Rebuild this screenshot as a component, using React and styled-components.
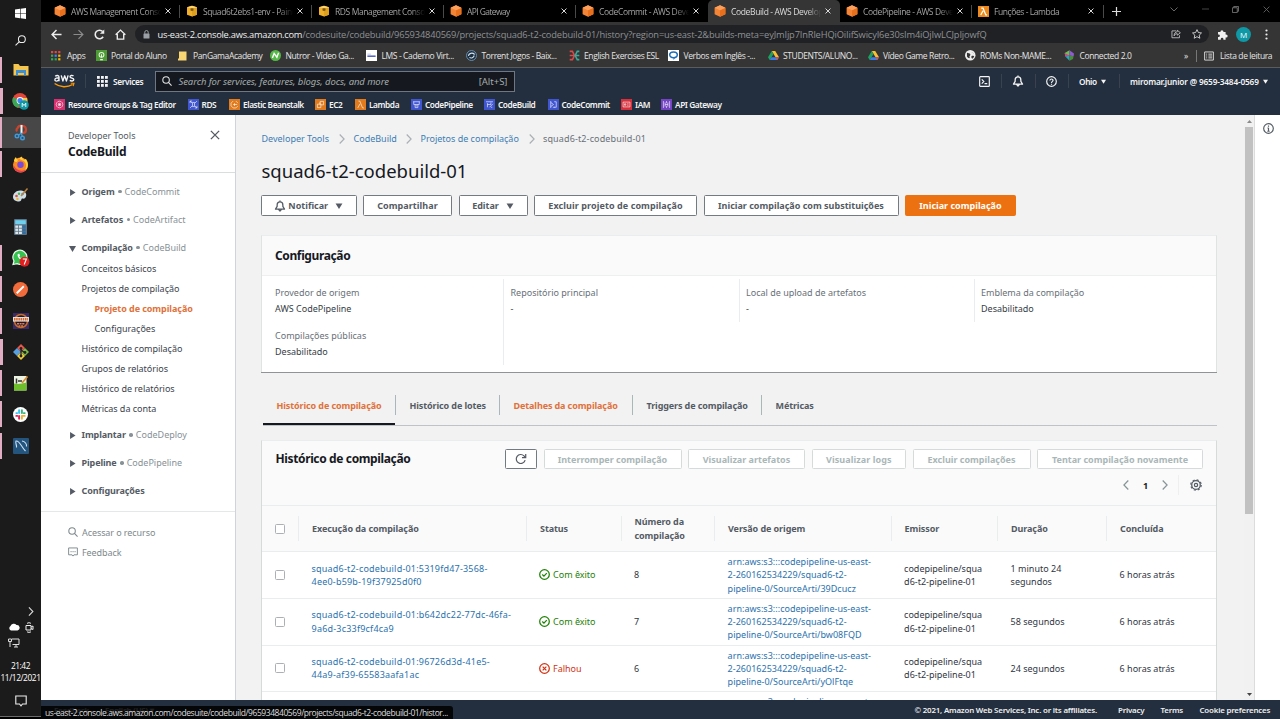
import React from "react";
import styled, { createGlobalStyle, css } from "styled-components";

const Global = createGlobalStyle`
  * { box-sizing: border-box; }
  html, body { margin: 0; padding: 0; background: #000; overflow: hidden; }
  body { font-family: "Noto Sans", "Open Sans", sans-serif; font-size: 9.3px; color: #16191f; }
  svg { flex: none; }
`;

const Desktop = styled.div`
  display: flex;
  width: 1280px;
  height: 719px;
  overflow: hidden;
`;

/* ---------- Taskbar ---------- */
const Taskbar = styled.aside`
  flex: none;
  width: 41px;
  height: 717px;
  background: #1c1b1b;
  border-bottom: 1px solid #6b6b6b;
  display: flex;
  flex-direction: column;
  color: #fff;
`;
const TaskSlot = styled.div`
  flex: none;
  height: ${(p) => p.$h || 31.3}px;
  display: flex;
  align-items: center;
  background: ${(p) => (p.$active ? "#484747" : "transparent")};
`;
const RunMark = styled.span`
  flex: none;
  width: ${(p) => p.$w}px;
  height: ${(p) => (p.$full ? "31px" : "26px")};
  background: ${(p) => (p.$w ? "#e0adc2" : "transparent")};
`;
const TaskIcon = styled.span`
  width: 41px;
  margin-left: -${(p) => p.$w}px;
  display: flex;
  justify-content: center;
`;
const Tray = styled.div`
  margin-top: auto;
  height: 113px;
  display: flex;
  flex-direction: column;
  align-items: center;
`;
const TrayRow = styled.div`
  width: 41px;
  height: 16px;
  padding: 0 7px 0 8px;
  display: flex;
  align-items: center;
  justify-content: ${(p) => (p.$end ? "flex-end" : "space-between")};
`;
const Clock = styled.div`
  margin-top: 9px;
  font: 8.4px/12px "Open Sans", sans-serif;
  letter-spacing: -0.45px;
  text-align: center;
  white-space: nowrap;
`;
const TrayNote = styled.div`
  height: 32px;
  width: 41px;
  padding-top: 2px;
  display: flex;
  align-items: center;
  justify-content: center;
`;

/* ---------- Browser ---------- */
const Browser = styled.div`
  position: relative;
  flex: none;
  width: 1239px;
  height: 719px;
  display: flex;
  flex-direction: column;
  font-family: "Open Sans", sans-serif;
`;
const TabStrip = styled.div`
  flex: none;
  height: 22px;
  background: #000;
  display: flex;
  align-items: center;
  padding-left: 7px;
`;
const Tab = styled.div`
  flex: none;
  width: 132px;
  height: 22px;
  display: flex;
  align-items: center;
  padding: 0 6px;
  color: ${(p) => (p.$active ? "#dcdcdc" : "#a3a3a3")};
  background: ${(p) => (p.$active ? "#353535" : "transparent")};
  border-radius: 5px 5px 0 0;
  font-size: 8.5px;
`;
const TabTitle = styled.span`
  flex: none;
  margin-left: 5px;
  width: 90px;
  overflow: hidden;
  white-space: nowrap;
  letter-spacing: ${(p) => p.$ls}px;
  mask-image: linear-gradient(90deg, #000 84%, transparent);
`;
const TabLine = styled.span`
  margin-left: auto;
  margin-right: -6px;
  width: 1px;
  height: 13px;
  background: ${(p) => (p.$off ? "transparent" : "#4a4a4a")};
`;
const CloseBox = styled.span`
  display: flex;
  margin-left: 4px;
`;
const NewTab = styled.span`
  display: flex;
  margin-left: 8px;
`;
const WindowButtons = styled.div`
  margin-left: auto;
  display: flex;
  align-items: center;
  width: 100px;
  padding-bottom: 4px;
  justify-content: space-between;
  margin-right: 10px;
`;
const NavBar = styled.div`
  flex: none;
  height: 23px;
  background: #353535;
  display: flex;
  align-items: center;
  padding: 1px 0 0 10px;
`;
const NavIcon = styled.span`
  flex: none;
  width: ${(p) => p.$w}px;
  display: flex;
  align-items: center;
`;
const UrlField = styled.div`
  flex: none;
  width: 1074px;
  height: 18px;
  margin-right: 8px;
  border-radius: 9px;
  background: #202124;
  display: flex;
  align-items: center;
  padding: 0 7px 0 8px;
  color: #8f9194;
  font-size: 9.3px;
`;
const UrlText = styled.span`
  flex: 1;
  margin-left: 7.5px;
  white-space: nowrap;
  letter-spacing: -0.145px;
  b { font-weight: 400; color: #f0f0f0; letter-spacing: -0.25px; }
`;
const Avatar = styled.span`
  width: 15px;
  height: 15px;
  border-radius: 50%;
  background: #0f98a5;
  color: #fff;
  font-size: 8px;
  display: flex;
  align-items: center;
  justify-content: center;
  margin: 0 13.5px 0 8px;
`;
const Bookmarks = styled.div`
  flex: none;
  height: 23px;
  background: #353535;
  border-bottom: 1px solid #5c5c5c;
  display: flex;
  align-items: center;
  padding: 0 0 1px 10px;
  color: #e4e4e4;
  font-size: 8.5px;
`;
const Bookmark = styled.div`
  flex: none;
  width: ${(p) => p.$w}px;
  display: flex;
  align-items: center;
  gap: ${(p) => p.$gap ?? 4.5}px;
  white-space: nowrap;
  letter-spacing: -0.38px;
`;
const BookmarkLine = styled.span`
  width: 1px;
  height: 12px;
  margin: 0 7px 0 -8px;
  background: #777;
`;

/* ---------- AWS header ---------- */
const AwsTop = styled.header`
  flex: none;
  height: 47px;
  background: #232f3e;
  color: #f4f4f4;
  font-family: "Noto Sans", sans-serif;
`;
const AwsRow = styled.div`
  height: 26px;
  display: flex;
  align-items: center;
  padding-left: 12.5px;
`;
const HeadLine = styled.span`
  width: 1px;
  height: 14px;
  margin-left: ${(p) => p.$ml || 0}px;
  background: #38434f;
`;
const ServicesBtn = styled.div`
  display: flex;
  align-items: center;
  gap: 5.5px;
  font-weight: 600;
  font-size: 8.3px;
  letter-spacing: -0.35px;
  margin-left: 11px;
  width: 58px;
`;
const SearchField = styled.div`
  width: 360px;
  height: 21px;
  background: #15191f;
  border: 1px solid #6f7882;
  display: flex;
  align-items: center;
  padding: 0 6px;
  color: #a4acac;
  font-size: 9.5px;
  i { margin-left: 7px; flex: 1; white-space: nowrap; letter-spacing: -0.09px; }
`;
const HeadRight = styled.div`
  margin-left: auto;
  width: 301px;
  display: flex;
  align-items: center;
  font-weight: 600;
  font-size: 8.3px;
`;
const HeadCell = styled.div`
  flex: none;
  width: ${(p) => p.$w}px;
  padding-left: ${(p) => p.$pl ?? 10.5}px;
  display: flex;
  align-items: center;
  white-space: nowrap;
  letter-spacing: ${(p) => p.$ls || 0}px;
  gap: 4px;
`;
const Favorites = styled.nav`
  height: 21px;
  display: flex;
  align-items: center;
  padding-left: 13px;
  font-size: 8.3px;
  font-weight: 600;
`;
const Favorite = styled.div`
  flex: none;
  width: ${(p) => p.$w}px;
  display: flex;
  align-items: center;
  gap: 3px;
  white-space: nowrap;
  letter-spacing: -0.42px;
`;

/* ---------- Console body ---------- */
const Body = styled.div`
  flex: none;
  height: 585px;
  display: flex;
  overflow: hidden;
  font-family: "Noto Sans", sans-serif;
  background: #f2f2f2;
`;
const Sidebar = styled.aside`
  flex: none;
  width: 195px;
  background: #fff;
  border-right: 1px solid #d0d4d8;
  font-size: 9px;
`;
const SideHead = styled.div`
  height: 58px;
  border-bottom: 1px solid #d8dddd;
  padding: 14px 15px 0 27px;
  display: flex;
  justify-content: space-between;
  color: #545b64;
  line-height: 13px;
  strong {
    display: block;
    color: #16191f;
    font-size: 12px;
    line-height: 20px;
    letter-spacing: -0.25px;
  }
`;
const CloseButton = styled.span`
  margin-top: 1px;
`;
const SideNav = styled.nav`
  padding-top: 4px;
  height: 339px;
  border-bottom: 1px solid #e4e8e8;
`;
const Group = styled.div`
  height: ${(p) => p.$h || 28}px;
  padding-left: 27.5px;
  display: flex;
  align-items: center;
  color: #879196;
  white-space: nowrap;
  b { color: #545b64; margin-right: 3.5px; letter-spacing: -0.1px; }
  svg { margin: 2px 6px 0 0; }
`;
const Dot = styled.i`
  width: 3.5px;
  height: 3.5px;
  margin: 1px 3px 0 0;
  border-radius: 50%;
  background: #879196;
`;
const SideLinks = styled.div`
  margin-top: -2px;
`;
const SideLink = styled.div`
  height: 20px;
  line-height: 20px;
  padding-left: ${(p) => (p.$deep ? 53.5 : 40.5)}px;
  color: ${(p) => (p.$current ? "#e0713a" : "#3a424c")};
  font-weight: ${(p) => (p.$current ? 700 : 400)};
  white-space: nowrap;
  letter-spacing: ${(p) => (p.$current ? -0.06 : -0.02)}px;
`;
const SideFoot = styled.div`
  padding: 10px 0 0 27px;
  color: #7d888c;
`;
const SideFootRow = styled.div`
  height: 20px;
  display: flex;
  align-items: center;
  gap: 4px;
  letter-spacing: -0.08px;
`;

const Main = styled.main`
  flex: none;
  width: 1008px;
  padding: 0 27px 0 25px;
  overflow: hidden;
`;
const Crumbs = styled.div`
  height: 47px;
  padding-left: 0.5px;
  display: flex;
  align-items: center;
  font-size: 9px;
  white-space: nowrap;
`;
const Crumb = styled.span`
  flex: none;
  width: ${(p) => p.$w}px;
  display: flex;
  align-items: center;
  justify-content: space-between;
  letter-spacing: ${(p) => p.$ls || 0}px;
  color: ${(p) => (p.$here ? "#687078" : "#3c7db4")};
  svg { margin-right: 8.5px; }
`;
const Title = styled.h1`
  margin: 0;
  height: 33px;
  padding-left: 0.5px;
  line-height: 18px;
  font-size: 18.5px;
  font-weight: 400;
`;
const Actions = styled.div`
  display: flex;
  height: 21px;
  margin-bottom: 19px;
`;
const Button = styled.button`
  flex: none;
  width: ${(p) => p.$w}px;
  height: ${(p) => p.$h || 21}px;
  margin: 0 ${(p) => p.$gap ?? 6.5}px 0 0;
  padding: 0;
  display: flex;
  align-items: center;
  justify-content: center;
  gap: ${(p) => p.$inner || 2}px;
  border: 1px solid #737b82;
  border-radius: 1.5px;
  background: #fff;
  color: #545b64;
  font-family: inherit;
  font-size: 9px;
  font-weight: 700;
  letter-spacing: ${(p) => p.$ls || 0}px;
  white-space: nowrap;
  ${(p) => p.$primary && css`
    background: #ec7211;
    border-color: #ec7211;
    color: #fff;
  `}
  ${(p) => p.$off && css`
    border-color: #d5dbdb;
    color: #aab7b8;
  `}
`;
const CaretSlot = styled.span`
  display: flex;
  margin-left: 5px;
`;

const Panel = styled.section`
  background: #fff;
  border: 1px solid #dfe3e3;
  border-top-color: #eaeded;
  border-bottom: 0;
  box-shadow: 0 1px 0 0 #8f9596;
`;
const PanelHead = styled.div`
  height: 40px;
  padding-left: 13px;
  background: #fafafa;
  border-bottom: 1px solid #eeefef;
  display: flex;
  align-items: center;
  font-size: 12px;
  font-weight: 700;
  letter-spacing: -0.38px;
`;
const ConfigGrid = styled.div`
  height: 96px;
  padding-top: 3px;
  display: grid;
  grid-template-columns: 241px 235.5px 235px 1fr;
`;
const ConfigCol = styled.div`
  height: ${(p) => p.$h}px;
  padding: 7px 0 0 ${(p) => (p.$first ? 13 : 6.5)}px;
  border-left: ${(p) => (p.$first ? 0 : 1)}px solid #eaeded;
`;
const Field = styled.dl`
  margin: 0;
  line-height: 13px;
  font-size: 9px;
  white-space: nowrap;
  dt { color: #687078; margin-bottom: 3px; height: 13px; }
  dd { color: #363d45; margin: 0; height: 13px; }
  & + & { margin-top: 14px; }
`;

const Tabs = styled.div`
  height: 31px;
  margin: 23px 0 14px 1.5px;
  border-bottom: 1px solid #bcc4c8;
  display: flex;
  font-size: 9px;
  font-weight: 700;
  color: #545b64;
`;
const TabItem = styled.div`
  flex: none;
  position: relative;
  width: ${(p) => p.$w}px;
  height: 20px;
  padding-left: 14px;
  line-height: 21px;
  white-space: nowrap;
  letter-spacing: -0.11px;
  border-right: 1px solid ${(p) => (p.$last ? "transparent" : "#aab7b8")};
  color: ${(p) => (p.$hot ? "#e0713a" : "inherit")};
`;
const TabUnderline = styled.span`
  position: absolute;
  left: 0;
  right: 0;
  top: 28px;
  height: 2px;
  background: #16191f;
`;

const HistoryPanel = styled.section`
  background: #fff;
  border: 1px solid #d5dbdb;
  border-top-color: #eaeded;
`;
const HistoryHead = styled.div`
  height: 65px;
  background: #fafafa;
  border-bottom: 1px solid #eaeded;
`;
const HistoryBar = styled.div`
  height: 28px;
  padding: 8px 0 0 13.5px;
  display: flex;
`;
const HistoryTitle = styled.h2`
  margin: 0;
  width: 229.5px;
  line-height: 20px;
  font-size: 12px;
  font-weight: 700;
  letter-spacing: -0.37px;
  white-space: nowrap;
`;
const Pager = styled.div`
  height: 32px;
  padding-right: 14px;
  display: flex;
  align-items: center;
  justify-content: flex-end;
  font-size: 9px;
  font-weight: 700;
`;
const PagerNum = styled.span`
  width: 33px;
  text-align: center;
`;
const PagerLine = styled.span`
  width: 1px;
  height: 20px;
  margin: 0 11px 0 10px;
  background: #eeefef;
`;
const GridRow = styled.div`
  display: grid;
  grid-template-columns: 36px 228px 94.5px 93.5px 176.5px 106.5px 109px 1fr;
  height: ${(p) => p.$h || 46.8}px;
  align-items: center;
  border-bottom: 1px solid #eaeded;
  background: ${(p) => (p.$head ? "#fafafa" : "#fff")};
  font-size: 9px;
  line-height: 13.3px;
  color: #30363f;
`;
const HeadCol = styled.div`
  height: 25px;
  padding-left: ${(p) => (p.$first ? 12 : 13)}px;
  border-left: 1px solid ${(p) => (p.$first ? "transparent" : "#eaeded")};
  display: flex;
  align-items: center;
  font-weight: 700;
  color: #545b64;
  white-space: nowrap;
  letter-spacing: -0.08px;
`;
const Cell = styled.div`
  padding-left: ${(p) => (p.$first ? 13 : 13.6)}px;
  white-space: nowrap;
  letter-spacing: ${(p) => p.$ls || 0}px;
  color: ${(p) => (p.$link ? "#2a72ae" : "inherit")};
`;
const State = styled.span`
  display: flex;
  align-items: center;
  gap: 3px;
  margin-left: -0.6px;
  color: ${(p) => (p.$ok ? "#1d8102" : "#d13212")};
`;
const Check = styled.span`
  display: block;
  width: 10px;
  height: 10px;
  border: 1px solid #aab0b3;
  border-radius: 1.5px;
  background: #fff;
`;
const Scrollbar = styled.div`
  flex: none;
  width: 11px;
  background: #f1f1f1;
  border-right: 1px solid #dcdcdc;
  display: flex;
  flex-direction: column;
  align-items: center;
`;
const Arrow = styled.span`
  height: 12px;
  display: flex;
  align-items: center;
`;
const Thumb = styled.div`
  width: 8px;
  height: 387px;
  margin-bottom: auto;
  background: #c1c1c1;
`;
const HelpRail = styled.div`
  flex: 1;
  background: #fff;
  padding: 8px 0 0 7.5px;
`;
const Footer = styled.footer`
  flex: 1;
  background: #232f3e;
  color: #eee;
  font: 600 7.9px "Noto Sans", sans-serif;
  display: flex;
  align-items: center;
  padding: 1px 0 0 13px;
  white-space: nowrap;
  letter-spacing: -0.19px;
`;
const FootItem = styled.span`
  flex: none;
  width: ${(p) => p.$w}px;
`;
const StatusBubble = styled.div`
  position: absolute;
  left: 0;
  bottom: 0;
  width: 412px;
  height: 13px;
  padding-left: 4px;
  background: rgba(0, 0, 0, 0.86);
  border-radius: 0 3px 0 0;
  color: #dcdcdc;
  font-size: 8.5px;
  line-height: 14px;
  letter-spacing: -0.44px;
  white-space: nowrap;
`;

/* ---------- Icons ---------- */
const Svg = ({ s = 12, w, h, vb = "0 0 16 16", children }) => (
  <svg width={w || s} height={h || s} viewBox={vb} fill="none">{children}</svg>
);
const Cube = () => (
  <Svg s={12} vb="0 0 12 12"><path d="M6 .3 11.4 2.8v6.4L6 11.7.6 9.2V2.8z" fill="#f58536" /><path d="M6 5.2v6.5l5.4-2.5V2.8z" fill="#e8701c" /><path d="M6 .3 11.4 2.8 6 5.2.6 2.8z" fill="#fba05c" /></Svg>
);
const Box = () => (
  <Svg s={12} vb="0 0 12 12"><path d="M1 2.200 6 .8l5 1.400v7.600L6 11.400 1 9.800z" fill="#f0b02c" /><path d="M6 3.700v7.700l5-1.600V2.200z" fill="#dfa020" /><path d="M1 2.200 6 .8l5 1.400-5 1.500z" fill="#ffd36b" /><path d="M4.500 3.200v2.400l1.500.5 1.500-.5V3.200" fill="#7a560f" /></Svg>
);
const LambdaFav = () => (
  <Svg s={11} vb="0 0 12 12"><rect width="12" height="12" fill="#ee8a1d" /><path d="M3.500 2.200h2l3 7.500h1.400M5.500 5.200 3 9.800" stroke="#fff" strokeWidth="1.400" /></Svg>
);
const X = ({ s = 6, c = "#e0e0e0", sw = 1.3 }) => <Svg s={s} vb="0 0 8 8"><path d="m.7.7 6.600 6.600M7.300.7.7 7.300" stroke={c} strokeWidth={sw} /></Svg>;
const Caret = ({ w = 7, h = 6 }) => <Svg w={w} h={h} vb="0 0 8 7"><path d="M0 .5h8L4 7z" fill="currentColor" /></Svg>;
const Tri = ({ open }) => <Svg s={7} vb="0 0 8 8"><path d={open ? "M0 1h8L4 8z" : "M1.200 0v8L7.500 4z"} fill="#545b64" /></Svg>;
const Chev = ({ left, c = "#879596", w = 6, h = 10 }) => <Svg w={w} h={h} vb="0 0 6 10"><path d={left ? "M5.300.5.9 5l4.400 4.500" : "M.7.5 5.100 5 .7 9.500"} stroke={c} strokeWidth="1.200" /></Svg>;
const Bell = ({ s = 12 }) => <Svg s={s}><path d="M8 .8v2M8 2.600c2.300 0 3.800 1.700 3.800 4V8.500L14 12.200H2L4.200 8.500V6.600c0-2.300 1.500-4 3.800-4zM6 12.500 8 14.800l2-2.300" stroke="currentColor" strokeWidth="1.700" strokeLinejoin="round" /></Svg>;
const Lens = ({ s = 10, c = "#545b64", flip, sw = 1.7 }) => (
  <Svg s={s}>{flip ? <><circle cx="10" cy="6" r="5" stroke={c} strokeWidth={sw} /><path d="M6.400 9.600.8 15.200" stroke={c} strokeWidth={sw} /></> : <><circle cx="6.500" cy="6.500" r="5.200" stroke={c} strokeWidth={sw} /><path d="m10.300 10.300 5 5" stroke={c} strokeWidth={sw} /></>}</Svg>
);
const AwsLogo = () => (
  <Svg w={21} h={14} vb="0 0 21 14">
    <g stroke="#f4f4f4" strokeWidth="1.350" strokeLinejoin="round">
      <path d="M1.200 2.200C2.400 1.200 5 1 5 3v4.200M5 4.200C3.200 3.800.9 4 .9 5.700.9 7.600 4 7.500 5 5.600" />
      <path d="m7.200 1.400 1.700 5.600L10.700 1.800 12.400 7l1.700-5.600" />
      <path d="M19.500 1.900c-1.200-.8-3.500-.6-3.500.8 0 1.800 3.800 1 3.800 2.900 0 1.700-2.800 1.700-4 .8" />
    </g>
    <path d="M.6 9.500c5.400 4 12.700 4.200 18 1" stroke="#f90" strokeWidth="1.400" /><path d="m16.800 9.300 3.200-.1-.9 2.900" stroke="#f90" strokeWidth="1.100" />
  </Svg>
);
const GridNine = () => <Svg s={11} vb="0 0 11 11">{[0, 4, 8].map((x) => [0, 4, 8].map((y) => <rect key={x + "-" + y} x={x} y={y} width="2.800" height="2.800" fill="#f4f4f4" />))}</Svg>;

const favGlyph = {
  rg: ["#d6306f", "M8 3.200a4.800 4.800 0 1 0 .01 0M8 5.500v5M5.500 8h5M6 6l4 4M10 6l-4 4"],
  rds: ["#4055d0", "M3 3l3 3M13 3l-3 3M3 13l3-3M13 13l-3-3M6.500 5v6h3V5zM3 6V3h3M13 10v3h-3"],
  eb: ["#e07a1c", "M6 3 3 6v4l3 3h4l3-3M6 8h6M8 6v4M10 3l3 3"],
  ec2: ["#e07a1c", "M3.500 12.500v-5h5v5zM7.500 8.500v-5h5v5h-4M6 6h2"],
  la: ["#e07a1c", "M5 3h2l4 10h2M7.300 7 4 13"],
  cp: ["#4055d0", "M3 4h10M4 4v4h8V4M6 8v4.500h4V8M7 10h2"],
  cb: ["#4055d0", "M3 4h10M5 6v6M5 8h5V5M8 12l5-5M10 12h2"],
  cc: ["#4055d0", "M4 3v10M4 5l4 3-4 3M9 4h3v8H9M7 12h3"],
  iam: ["#d7303c", "M3 4.500h10v7H3zM5 7h2v2H5zM9 7h2M9 9h2"],
  api: ["#7444c4", "M3.500 3v10M6 5v6M8 3v3M8 10v3M10 5v6M12.500 3v10M6 8h4"],
};
const FavIcon = ({ k }) => (
  <Svg s={11}><rect width="16" height="16" fill={favGlyph[k][0]} /><path d={favGlyph[k][1]} stroke="#fff" strokeOpacity=".8" strokeWidth="1.100" /></Svg>
);
const Drive = () => <Svg s={11}><path d="M5.500 1.500h5L16 10.500h-5z" fill="#fbc02d" /><path d="M5.500 1.500 0 10.700l2.500 4L8 5.700z" fill="#1fa35c" /><path d="M5 10.500h11l-2.500 4.200h-11z" fill="#3b7de8" /><path d="M11 10.500h5l-2.500 4.200z" fill="#e0503f" /></Svg>;

const bmIcon = {
  apps: <Svg s={10} vb="0 0 10 10">{["#e8453c", "#e8453c", "#e8453c", "#34a853", "#4285f4", "#fbbc05", "#34a853", "#34a853", "#fbbc05"].map((c, i) => <rect key={i} x={(i % 3) * 3.6} y={Math.floor(i / 3) * 3.6} width="2.200" height="2.200" fill={c} />)}</Svg>,
  aluno: <Svg s={11}><rect width="16" height="16" fill="#4c9b34" /><circle cx="8" cy="7" r="3.500" stroke="#e6f4df" strokeWidth="1.500" /><path d="M6 14h4M8 6v5" stroke="#e6f4df" strokeWidth="1.500" /></Svg>,
  pan: <Svg w={9} h={10} vb="0 0 9 10"><path d="M1 .5h7.500V9.500H0V7.500h1z" fill="#f8d673" /></Svg>,
  nutror: <Svg s={11}><circle cx="8" cy="8" r="8" fill="#55b947" /><path d="M3.500 11.500 6 5l4 5.500L12.500 4" stroke="#fff" strokeWidth="2" /></Svg>,
  lms: <Svg s={11}><rect width="16" height="16" fill="#fff" /><path d="M2 9h12" stroke="#3f51b5" strokeWidth="2" /><path d="M2 6h5" stroke="#9fa8da" strokeWidth="1" /></Svg>,
  torrent: <Svg s={11}><circle cx="8" cy="8" r="7.200" fill="#1b2d3f" stroke="#6c93b5" strokeWidth="1.400" /><path d="M3.500 8.500C4 5 9 3 12.500 6.500M5 11c3 1.500 6 0 7-3" stroke="#d5e4f0" strokeWidth="1.700" /></Svg>,
  esl: <Svg s={11}><path d="M1 2h4l3 6-3 6H1M1 8h6" stroke="#d94a4a" strokeWidth="2.200" /><path d="M15 2h-3L9 8l3 6h3M9 8h6" stroke="#3aa89a" strokeWidth="2.200" /></Svg>,
  verbos: <Svg s={11}><rect width="16" height="16" fill="#fff" /><ellipse cx="8" cy="7" rx="5.500" ry="4.200" stroke="#1d6fb8" strokeWidth="2.200" /><path d="M8 11v3.500l3-4" fill="#1d6fb8" /></Svg>,
  drive: <Drive />,
  roms: <Svg s={10.5}><circle cx="8" cy="8" r="8" fill="#eee" /><path d="M3 4c2 1 4 0 5 2S6 9 7 11s-2 2-4-1M10 3c1 2 3 1 4 3M10 9c2-1 4 0 4 1l-2 3c-2 0-3-2-2-4" fill="#353535" /></Svg>,
  conn: <Svg s={11}><path d="M8 8V.5L1 4.500l1 5z" fill="#6cc24a" /><path d="M8 8V.5l6.500 4.500L14 9z" fill="#8e5bd0" /><path d="M8 8 2 9.500 8 15.500z" fill="#29a3c9" /><path d="M8 8v7.500L13 13l1-4z" fill="#4b8f3a" /><path d="M1 4.500 8 8l-6 1.500z" fill="#c8468e" /></Svg>,
};

const taskIcons = [
  { w: 2, g: <Svg w={16} h={14} vb="0 0 16 14"><path d="M.5 1h5l1.500 2h8.500v9.500H.5z" fill="#f4c64f" /><path d="M3 7h10v5.500h-2V10H5v2.500H3z" fill="#3a8fd6" /></Svg> },
  { w: 3, g: <Svg s={17} vb="0 0 17 17"><circle cx="8" cy="7.500" r="7.500" fill="#e4473a" /><path d="M1.200 4.200 8 7.500 6.500 15A7.500 7.500 0 0 1 1.200 4.200z" fill="#3aa757" /><path d="M15 5H8v10a7.500 7.500 0 0 0 7-10z" fill="#f6c945" /><circle cx="8" cy="7.500" r="3.400" fill="#fff" /><circle cx="8" cy="7.500" r="2.600" fill="#4285f4" /><circle cx="12" cy="12" r="4.800" fill="#0f98a5" /><path d="M10.200 14v-3.800l1.800 2.300 1.800-2.300V14" stroke="#fff" strokeWidth=".9" /></Svg> },
  { w: 1.5, active: true, g: <Svg s={17} vb="0 0 17 17"><path d="M5.500 4C7 .5 14 1 14 5.500c0 2.500-1.500 3.500-3 3.500M5 7.500C4 6 4.500 4 6.500 4" stroke="#c9442e" strokeWidth="2.200" /><path d="M9.500 1v8.500" stroke="#f2f4f6" strokeWidth="2" /><path d="M9.500 9 6 11.500M9 9l1.500 3.500" stroke="#3b9be0" strokeWidth="1.300" /><circle cx="5" cy="12" r="1.800" stroke="#3b9be0" strokeWidth="1.400" /><circle cx="10.500" cy="14" r="1.800" stroke="#3b9be0" strokeWidth="1.400" /></Svg> },
  { w: 1.5, g: <Svg s={17} vb="0 0 17 17"><circle cx="8.500" cy="9" r="7.500" fill="#ff8a1f" /><path d="M2 5c1 1 2 1 3 1l2-4c1 2 4 2 6 4 2 3 1 8-2 9.500C16 14 17.500 8 14 3c-1 0-1.500 1-2 1-1-1-2-2-2-3.500C7 2 7 3 6 4 5 3 4 2 4 1 3 2 2 3 2 5z" fill="#ffcf3d" /><path d="M1.500 9c0 4 3 7.500 7 7.500 3 0 5-1.500 6-3.500-4 3-10 2-13-4z" fill="#e8405a" /><circle cx="8.500" cy="8.800" r="3.200" fill="#7a4ad8" /></Svg> },
  { w: 0, g: <Svg s={17} vb="0 0 17 17"><path d="M1 10c0-4 4-7 8-6.500s6 3 5 6-3 2-4 2 0 3-3 3-6-1.500-6-4.500z" fill="#cfdfe8" /><circle cx="4.500" cy="9" r="1.300" fill="#e04f3f" /><circle cx="7" cy="6.700" r="1.200" fill="#4caf50" /><circle cx="10.500" cy="7" r="1.200" fill="#2f86d6" /><circle cx="5.500" cy="12" r="1.200" fill="#f0b429" /><path d="M9 9 15.500 1.500" stroke="#b9823f" strokeWidth="1.500" /></Svg> },
  { w: 0, g: <Svg w={13} h={16} vb="0 0 13 16"><rect width="13" height="16" rx="1" fill="#5d7486" /><rect x="1.200" y="1.200" width="10.600" height="4" fill="#6fd0ee" />{[0, 1, 2].map((r) => [0, 1, 2].map((c) => <rect key={r + "" + c} x={1.3 + c * 3.7} y={6.5 + r * 3.1} width="2.900" height="2.300" fill={c === 2 ? "#2a6da8" : "#dce6ec"} />))}</Svg> },
  { w: 1.5, g: <Svg s={18} vb="0 0 18 18"><path d="M1 15.500 2 12a7 7 0 1 1 3 2.600z" fill="#35c24e" stroke="#e8f8ea" strokeWidth="1.200" /><path d="M5.500 5.500c0 3 2.500 5.500 5.500 5.500l1-1.500-2-1-1 .8L7.300 7.500l.8-1-1-2z" fill="#fff" /><circle cx="12.500" cy="12.700" r="5" fill="#e02020" /><path d="M10.800 10h3.600l-2.200 5.500" stroke="#fff" strokeWidth="1.100" /></Svg> },
  { w: 1.5, g: <Svg s={15}><circle cx="8" cy="8" r="8" fill="#f26b3a" /><path d="M4 12 11.500 4.500" stroke="#fff" strokeWidth="2" /></Svg> },
  { w: 1.5, g: <Svg s={16}><rect width="16" height="16" fill="#3a2a66" /><circle cx="8" cy="8" r="6.500" fill="#1e1830" stroke="#c86c2c" strokeWidth="1.500" /><rect y="4" width="16" height="4.600" fill="#e4e0dc" /><path d="M1 6.300h14" stroke="#d9662b" strokeWidth="2.600" strokeDasharray="1.500 .7" /><path d="M4 10.800h8M5.500 13h5" stroke="#e9804c" strokeWidth="1.600" strokeDasharray="2 .6" /></Svg> },
  { w: 3, g: <Svg s={16}><path d="M8 0 4 4l4 4 4-4z" fill="#e8574a" /><path d="M0 8l4-4 4 4-4 4z" fill="#57a0e0" /><path d="M16 8l-4-4-4 4 4 4z" fill="#7bb84c" /><path d="M8 16l-4-4 4-4 4 4z" fill="#f0cf3d" /><path d="M8 4v8M8 6l3.500 2.500" stroke="#222" strokeWidth="1.300" /><circle cx="8" cy="4.500" r="1.400" fill="#222" /><circle cx="8" cy="12" r="1.400" fill="#222" /><circle cx="12" cy="8.500" r="1.400" fill="#222" /></Svg> },
  { w: 1.5, g: <Svg s={16}><rect x="1" y="1" width="12.500" height="14.500" fill="#eef4e4" /><path d="M1 8.500c4 1 8 0 12.500-1v8H1z" fill="#6fbe2d" /><path d="M3.500 3.500v5M5 6h4" stroke="#333" strokeWidth="1.500" /><path d="M9 8 14.500 1.500" stroke="#d98a2b" strokeWidth="1.700" /></Svg> },
  { w: 1.5, g: <Svg s={15}><circle cx="8" cy="8" r="8" fill="#fff" /><g strokeWidth="2" strokeLinecap="round"><path d="M6.500 3.500v3M3.500 6.500h1" stroke="#36c5f0" /><path d="M9.500 3.500v3M12.500 6.500h-1" stroke="#2eb67d" /><path d="M9.500 12.500v-2M9.500 9.500h3" stroke="#ecb22e" /><path d="M6.500 12.500v-3M3.500 9.500h1" stroke="#e01e5a" /></g></Svg> },
  { w: 1.5, g: <Svg s={16}><rect width="16" height="16" rx="1" fill="#24557f" /><path d="M3.500 9.500C4 7 2 5 3 3c3.500-1 5 5.500 9.500 10M9 3c3 .5 5 3 4.500 5.500" stroke="#cfe2f2" strokeWidth="1.100" /></Svg> },
];

/* ---------- Data ---------- */
const tabs = [
  ["AWS Management Console", <Cube />, -0.42],
  ["Squad6t2ebs1-env - Painel", <Box />, -0.4],
  ["RDS Management Console", <Box />, -0.4],
  ["API Gateway", <Cube />, -0.6],
  ["CodeCommit - AWS Developer", <Cube />, -0.38],
  ["CodeBuild - AWS Developer", <Cube />, -0.35, true],
  ["CodePipeline - AWS Developer", <Cube />, -0.38],
  ["Funções - Lambda", <LambdaFav />, -0.42],
];
const bookmarks = [
  ["Apps", "apps", 44.5, 6],
  ["Portal do Aluno", "aluno", 82.5],
  ["PanGamaAcademy", "pan", 92, 6],
  ["Nutror - Vídeo Ga...", "nutror", 96],
  ["LMS - Caderno Virt...", "lms", 100],
  ["Torrent Jogos - Baix...", "torrent", 102.5],
  ["English Exercises ESL", "esl", 99.5],
  ["Verbos em Inglês -...", "verbos", 99.5],
  ["STUDENTS/ALUNO...", "drive", 100],
  ["Vídeo Game Retro...", "drive", 97.5],
  ["ROMs Non-MAME...", "roms", 99],
  ["Connected 2.0", "conn", 120],
];
const favorites = [
  ["Resource Groups & Tag Editor", "rg", 133.5],
  ["RDS", "rds", 41.5],
  ["Elastic Beanstalk", "eb", 86],
  ["EC2", "ec2", 40],
  ["Lambda", "la", 56],
  ["CodePipeline", "cp", 73],
  ["CodeBuild", "cb", 63.5],
  ["CodeCommit", "cc", 73.5],
  ["IAM", "iam", 40],
  ["API Gateway", "api", 80],
];
const builds = [
  { run: ["squad6-t2-codebuild-01:5319fd47-3568-", "4ee0-b59b-19f37925d0f0"], ok: true, n: 8, art: "39Dcucz", dur: ["1 minuto 24", "segundos"] },
  { run: ["squad6-t2-codebuild-01:b642dc22-77dc-46fa-", "9a6d-3c33f9cf4ca9"], ok: true, n: 7, art: "bw08FQD", dur: ["58 segundos"] },
  { run: ["squad6-t2-codebuild-01:96726d3d-41e5-", "44a9-af39-65583aafa1ac"], ok: false, n: 6, art: "yOlFtqe", dur: ["24 segundos"] },
];
const Lines = ({ of }) => of.map((t, i) => <React.Fragment key={i}>{i > 0 && <br />}{t}</React.Fragment>);
const arn = "arn:aws:s3:::codepipeline-us-east-";

const NavGroup = ({ h, open, name, service }) => (
  <Group $h={h}><Tri open={open} /><b>{name}</b>{service && <><Dot />{service}</>}</Group>
);

export default function App() {
  return (
    <Desktop>
      <Global />
      <Taskbar>
        <TaskSlot $h={26}><TaskIcon $w={0}><Svg s={11} vb="0 0 11 11"><path d="M0 1.500 5 .8V5.200H0zM5.600.7 11 0v5.200H5.600zM0 5.800h5v4.400L0 9.500zM5.600 5.800H11V11l-5.400-.7z" fill="#fff" /></Svg></TaskIcon></TaskSlot>
        <TaskSlot $h={28.5}><TaskIcon $w={0}><Lens flip s={11} c="#eee" sw={1.5} /></TaskIcon></TaskSlot>
        {taskIcons.map((t, i) => (
          <TaskSlot key={i} $active={t.active}><RunMark $w={t.w} $full={t.active} /><TaskIcon $w={t.w}>{t.g}</TaskIcon></TaskSlot>
        ))}
        <Tray>
          <TrayRow $end><Chev c="#ddd" w={6} h={9} /></TrayRow>
          <TrayRow>
            <Svg w={12} h={8} vb="0 0 12 8"><path d="M3 7.500a2.500 2.500 0 0 1-.5-4.500A3.500 3.500 0 0 1 8.500 2 2.800 2.800 0 0 1 9.500 7.500z" fill="#fff" /></Svg>
            <Svg w={9} h={11} vb="0 0 9 11"><path d="M1 3.500h5v4.500H1zM6 5l2-1v3.500L6 6.500M2 1.500C3 .5 5 .5 6 1.500M2 9.800c1 .7 3 .7 4 0" stroke="#eee" /></Svg>
          </TrayRow>
          <TrayRow><Svg w={12} h={10} vb="0 0 12 10"><path d="M4 1h7v5.500H4.500M6 9h4M8 6.500V9M.5 1h3v2.500h-3zM2 3.500V9" stroke="#ddd" /></Svg></TrayRow>
          <Clock>21:42<br />11/12/2021</Clock>
          <TrayNote><Svg w={12} h={12} vb="0 0 12 12"><path d="M.8 1h10.400v8H7.500L6 10.800 4.500 9H.8z" stroke="#eee" strokeWidth="1.100" /></Svg></TrayNote>
        </Tray>
      </Taskbar>

      <Browser>
        <TabStrip>
          {tabs.map(([t, ic, ls, on], i) => (
            <Tab key={i} $active={on}>{ic}<TabTitle $ls={ls}>{t}</TabTitle><CloseBox><X /></CloseBox><TabLine $off={i === 4 || i === 5} /></Tab>
          ))}
          <NewTab><Svg s={9} vb="0 0 9 9"><path d="M4.500 0v9M0 4.500h9" stroke="#ddd" strokeWidth="1.200" /></Svg></NewTab>
          <WindowButtons>
            <Svg w={8} h={5} vb="0 0 8 5"><path d="m.5.5 3.500 3.500L7.500.5" stroke="#666" /></Svg>
            <Svg w={7} h={2} vb="0 0 7 2"><path d="M0 1h7" stroke="#444" /></Svg>
            <Svg s={7} vb="0 0 8 8"><path d="M.5 2h5.500v5.500H.5zM2 2V.5h5.500V6H6" stroke="#777" /></Svg>
            <X s={7} c="#666" sw={1} />
          </WindowButtons>
        </TabStrip>
        <NavBar>
          <NavIcon $w={21.5}><Svg s={11} vb="0 0 12 12"><path d="M11.500 6H1.500M6 1.200 1.200 6 6 10.800" stroke="#eee" strokeWidth="1.600" /></Svg></NavIcon>
          <NavIcon $w={21}><Svg s={11} vb="0 0 12 12"><path d="M.5 6h10M6 1.200 10.800 6 6 10.800" stroke="#8c8c8c" strokeWidth="1.300" /></Svg></NavIcon>
          <NavIcon $w={21}><Svg s={11} vb="0 0 12 12"><path d="M10 8.500A4.700 4.700 0 1 1 9.500 2.800" stroke="#eee" strokeWidth="1.700" /><path d="M11.200.5v4.700H6.500z" fill="#eee" /></Svg></NavIcon>
          <NavIcon $w={20.5}><Svg s={11} vb="0 0 12 12"><path d="M.7 6.200 6 1.200l5.300 5M2.500 5.500v5.500h7V5.500" stroke="#eee" strokeWidth="1.500" /></Svg></NavIcon>
          <UrlField>
            <Svg w={7} h={9} vb="0 0 7 9"><rect x=".5" y="3.500" width="6" height="5" rx=".6" fill="#9aa0a6" /><path d="M1.800 3.800V2.200a1.700 1.700 0 0 1 3.400 0v1.600" stroke="#9aa0a6" strokeWidth="1" /></Svg>
            <UrlText><b>us-east-2.console.aws.amazon.com</b>/codesuite/codebuild/965934840569/projects/squad6-t2-codebuild-01/history?region=us-east-2&amp;builds-meta=eyJmIjp7InRleHQiOiIifSwicyI6e30sIm4iOjIwLCJpIjowfQ</UrlText>
            <NavIcon $w={21.5}><Svg s={10}><path d="M8 3H1.500v11h12v-4M10 2l5 4-5 4V7.500C7 7.500 6 8.500 5 11c0-4 2-6.500 5-6.500z" stroke="#ccc" strokeWidth="1.300" /></Svg></NavIcon>
            <NavIcon $w={10}><Svg s={10}><path d="m8 1 2.200 4.700 5 .6-3.700 3.500 1 5L8 12.300 3.500 14.800l1-5L.8 6.300l5-.6z" stroke="#ddd" strokeWidth="1.400" /></Svg></NavIcon>
          </UrlField>
          <Svg s={11}><path d="M1.500 4.500H5V4a2.200 2.200 0 0 1 4.400 0v.5h3.100V8h.8a2.200 2.200 0 0 1 0 4.400h-.8v3.100H9.300v-.8a1.900 1.900 0 0 0-3.800 0v.8h-4v-3.800h.8a1.900 1.900 0 0 0 0-3.800h-.8z" fill="#f1f1f1" /></Svg>
          <Avatar>M</Avatar>
          <Svg w={3} h={11} vb="0 0 3 11"><circle cx="1.500" cy="1.500" r="1.100" fill="#eee" /><circle cx="1.500" cy="5.500" r="1.100" fill="#eee" /><circle cx="1.500" cy="9.500" r="1.100" fill="#eee" /></Svg>
        </NavBar>
        <Bookmarks>
          {bookmarks.map(([t, k, w, gap]) => (
            <Bookmark key={t} $w={w} $gap={gap}>{bmIcon[k]}{t}</Bookmark>
          ))}
          <Bookmark $w={20}>»</Bookmark>
          <BookmarkLine />
          <Bookmark $w={70} $gap={6}><Svg s={10}><path d="M1 1.500h14v13H1zM3.500 5h1.500M7 5h6M3.500 8h1.500M7 8h6M3.500 11h1.500M7 11h6" stroke="#ddd" strokeWidth="1.500" /></Svg>Lista de leitura</Bookmark>
        </Bookmarks>

        <AwsTop>
          <AwsRow>
            <AwsLogo />
            <HeadLine $ml={10} />
            <ServicesBtn><GridNine />Services</ServicesBtn>
            <SearchField><Lens s={10} c="#e6e6e6" /><i>Search for services, features, blogs, docs, and more</i><span>[Alt+S]</span></SearchField>
            <HeadRight>
              <HeadCell $w={21.5} $pl={0}><Svg s={11}><rect x="1" y="1" width="14" height="14" rx="1" stroke="#f4f4f4" strokeWidth="1.700" /><path d="m4 5 3 3-3 3M8 11h4" stroke="#f4f4f4" strokeWidth="1.700" /></Svg></HeadCell>
              <HeadLine /><HeadCell $w={33}><Bell s={12} /></HeadCell>
              <HeadLine /><HeadCell $w={32}><Svg s={11}><circle cx="8" cy="8" r="7" stroke="#f4f4f4" strokeWidth="1.700" /><path d="M5.700 6.500C5.700 3.500 10.400 3.800 10.300 6.300 10.200 7.800 8 8 8 10M8 11.200v1.700" stroke="#f4f4f4" strokeWidth="1.700" /></Svg></HeadCell>
              <HeadLine /><HeadCell $w={50} $ls={-0.4}>Ohio<Caret w={5} h={5} /></HeadCell>
              <HeadLine /><HeadCell $w={150} $ls={-0.18}>miromar.junior @ 9659-3484-0569<Caret w={5} h={5} /></HeadCell>
            </HeadRight>
          </AwsRow>
          <Favorites>
            {favorites.map(([t, k, w]) => <Favorite key={k} $w={w}><FavIcon k={k} />{t}</Favorite>)}
          </Favorites>
        </AwsTop>

        <Body>
          <Sidebar>
            <SideHead><div>Developer Tools<strong>CodeBuild</strong></div><CloseButton><X s={10} c="#545b64" sw={1.1} /></CloseButton></SideHead>
            <SideNav>
              <NavGroup name="Origem" service="CodeCommit" />
              <NavGroup name="Artefatos" service="CodeArtifact" />
              <NavGroup open name="Compilação" service="CodeBuild" />
              <SideLinks>
                <SideLink>Conceitos básicos</SideLink>
                <SideLink>Projetos de compilação</SideLink>
                <SideLink $deep $current>Projeto de compilação</SideLink>
                <SideLink $deep>Configurações</SideLink>
                <SideLink>Histórico de compilação</SideLink>
                <SideLink>Grupos de relatórios</SideLink>
                <SideLink>Histórico de relatórios</SideLink>
                <SideLink>Métricas da conta</SideLink>
              </SideLinks>
              <NavGroup h={31} name="Implantar" service="CodeDeploy" />
              <NavGroup h={25} name="Pipeline" service="CodePipeline" />
              <NavGroup h={31} name="Configurações" />
            </SideNav>
            <SideFoot>
              <SideFootRow><Lens s={10} c="#7d888c" />Acessar o recurso</SideFootRow>
              <SideFootRow><Svg s={10}><path d="M1 1.500h14v11H9.500L8 14.500l-1.500-2H1z" stroke="#7d888c" strokeWidth="1.500" /><path d="M4 7.500h1.800M7.200 7.500H9M10.400 7.500h1.800" stroke="#7d888c" strokeWidth="1.600" /></Svg>Feedback</SideFootRow>
            </SideFoot>
          </Sidebar>

          <Main>
            <Crumbs>
              <Crumb $w={92}>Developer Tools<Chev c="#aab0b4" /></Crumb>
              <Crumb $w={67}>CodeBuild<Chev c="#aab0b4" /></Crumb>
              <Crumb $w={122.5}>Projetos de compilação<Chev c="#aab0b4" /></Crumb>
              <Crumb $here $ls={0.13}>squad6-t2-codebuild-01</Crumb>
            </Crumbs>
            <Title>squad6-t2-codebuild-01</Title>
            <Actions>
              <Button $w={95.5}><Bell s={12} />Notificar<CaretSlot><Caret w={8} h={6} /></CaretSlot></Button>
              <Button $w={89} $ls={0.05}>Compartilhar</Button>
              <Button $w={69}>Editar<CaretSlot><Caret w={8} h={6} /></CaretSlot></Button>
              <Button $w={163} $ls={0.08}>Excluir projeto de compilação</Button>
              <Button $w={195}>Iniciar compilação com substituições</Button>
              <Button $w={111} $primary>Iniciar compilação</Button>
            </Actions>

            <Panel>
              <PanelHead>Configuração</PanelHead>
              <ConfigGrid>
                <ConfigCol $first $h={86}>
                  <Field><dt>Provedor de origem</dt><dd>AWS CodePipeline</dd></Field>
                  <Field><dt>Compilações públicas</dt><dd>Desabilitado</dd></Field>
                </ConfigCol>
                <ConfigCol $h={86}><Field><dt>Repositório principal</dt><dd>-</dd></Field></ConfigCol>
                <ConfigCol $h={43}><Field><dt>Local de upload de artefatos</dt><dd>-</dd></Field></ConfigCol>
                <ConfigCol $h={43}><Field><dt>Emblema da compilação</dt><dd>Desabilitado</dd></Field></ConfigCol>
              </ConfigGrid>
            </Panel>

            <Tabs>
              <TabItem $w={133} $hot>Histórico de compilação<TabUnderline /></TabItem>
              <TabItem $w={104}>Histórico de lotes</TabItem>
              <TabItem $w={133} $hot>Detalhes da compilação</TabItem>
              <TabItem $w={129}>Triggers de compilação</TabItem>
              <TabItem $w={80} $last>Métricas</TabItem>
            </Tabs>

            <HistoryPanel>
              <HistoryHead>
                <HistoryBar>
                  <HistoryTitle>Histórico de compilação</HistoryTitle>
                  <Button $h={20} $w={32}><Svg s={12}><path d="M13.500 9.500A6 6 0 1 1 12 3.800L14 6" stroke="#545b64" strokeWidth="1.600" /><path d="M14.300 1.200v5H9.300" stroke="#545b64" strokeWidth="1.600" /></Svg></Button>
                  <Button $h={20} $off $w={138}>Interromper compilação</Button>
                  <Button $h={20} $off $w={117}>Visualizar artefatos</Button>
                  <Button $h={20} $off $w={94.5} $ls={0.08}>Visualizar logs</Button>
                  <Button $h={20} $off $w={118}>Excluir compilações</Button>
                  <Button $h={20} $off $w={166}>Tentar compilação novamente</Button>
                </HistoryBar>
                <Pager>
                  <Chev left /><PagerNum>1</PagerNum><Chev /><PagerLine />
                  <Svg s={12}><circle cx="8" cy="8" r="5.700" stroke="#545b64" strokeWidth="1.700" /><circle cx="8" cy="8" r="7" stroke="#545b64" strokeWidth="1.500" strokeDasharray="2.750 2.750" /><circle cx="8" cy="8" r="2.200" stroke="#545b64" strokeWidth="1.600" /></Svg>
                </Pager>
              </HistoryHead>
              <GridRow $head $h={46}>
                <HeadCol $first><Check /></HeadCol>
                <HeadCol>Execução da compilação</HeadCol>
                <HeadCol>Status</HeadCol>
                <HeadCol><span>Número da<br />compilação</span></HeadCol>
                <HeadCol>Versão de origem</HeadCol>
                <HeadCol>Emissor</HeadCol>
                <HeadCol>Duração</HeadCol>
                <HeadCol>Concluída</HeadCol>
              </GridRow>
              {builds.map((b) => (
                <GridRow key={b.n}>
                  <Cell $first><Check /></Cell>
                  <Cell $link $ls={0.2}><Lines of={b.run} /></Cell>
                  <Cell><State $ok={b.ok}><Svg s={11}><circle cx="8" cy="8" r="7" stroke="currentColor" strokeWidth="1.800" /><path d={b.ok ? "m4.800 8 2.400 2.500L11.300 6" : "m5.300 5.300 5.400 5.400M10.700 5.300l-5.400 5.400"} stroke="currentColor" strokeWidth="1.800" /></Svg>{b.ok ? "Com êxito" : "Falhou"}</State></Cell>
                  <Cell>{b.n}</Cell>
                  <Cell $link $ls={0.02}><Lines of={[arn, "2-260162534229/squad6-t2-", "pipeline-0/SourceArti/" + b.art]} /></Cell>
                  <Cell><Lines of={["codepipeline/squa", "d6-t2-pipeline-01"]} /></Cell>
                  <Cell><Lines of={b.dur} /></Cell>
                  <Cell>6 horas atrás</Cell>
                </GridRow>
              ))}
              <GridRow>
                <Cell /><Cell /><Cell /><Cell />
                <Cell $link $ls={0.02}><Lines of={[arn, "2-260162534229/squad6-t2-", "pipeline-0/SourceArti/"]} /></Cell>
              </GridRow>
            </HistoryPanel>
          </Main>
          <Scrollbar>
            <Arrow><Svg w={5} h={3} vb="0 0 5 3"><path d="M0 3h5L2.500 0z" fill="#8a8a8a" /></Svg></Arrow>
            <Thumb />
            <Arrow><Svg w={5} h={3} vb="0 0 5 3"><path d="M0 0h5L2.500 3z" fill="#444" /></Svg></Arrow>
          </Scrollbar>
          <HelpRail><Svg s={11}><circle cx="8" cy="8" r="7" stroke="#545b64" strokeWidth="1.700" /><path d="M8 7v5M6.500 7.300H8M6.300 12h3.400M8 3.800v1.800" stroke="#545b64" strokeWidth="1.700" /></Svg></HelpRail>
        </Body>

        <Footer>
          <FootItem $w={51}>Feedback</FootItem>
          <FootItem $w={809.5}>English (US) ▾</FootItem>
          <FootItem $w={203.5}>© 2021, Amazon Web Services, Inc. or its affiliates.</FootItem>
          <FootItem $w={42.5}>Privacy</FootItem>
          <FootItem $w={39}>Terms</FootItem>
          <FootItem>Cookie preferences</FootItem>
        </Footer>
        <StatusBubble>us-east-2.console.aws.amazon.com/codesuite/codebuild/965934840569/projects/squad6-t2-codebuild-01/histor...</StatusBubble>
      </Browser>
    </Desktop>
  );
}
